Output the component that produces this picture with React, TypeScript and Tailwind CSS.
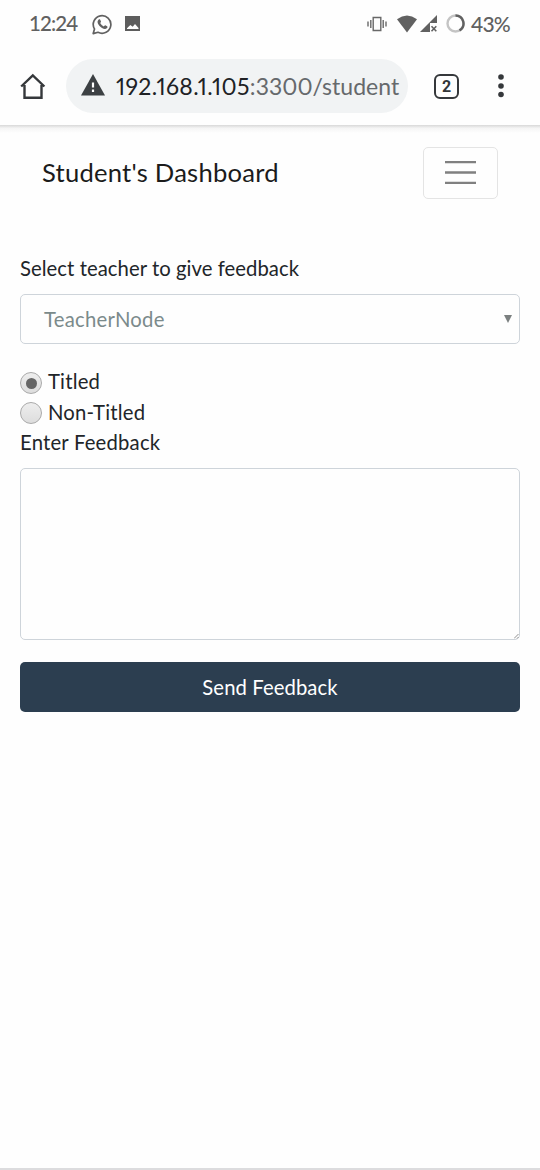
import React from "react";

function StatusBar() {
  return (
    <div className="flex h-[47px] items-center pl-[29px] pr-[29px] text-[#616161]">
      <span className="w-[49px] whitespace-nowrap text-[20.5px] font-medium leading-none tracking-[-0.9px]">12:24</span>
      <svg className="ml-[14px] mt-px h-[21px] w-[21px]" viewBox="0 0 21 21" fill="none">
        <path d="M1.2 19.6 2.5 15A8.8 8.8 0 1 1 6 18.3Z" stroke="#616161" strokeWidth="1.7" strokeLinejoin="round" />
        <path d="M6.7 5.6c.5-.5 1.2-.5 1.5.1l.8 1.9c.1.5-.5 1.1-.8 1.5.8 1.5 2 2.6 3.6 3.3.5-.4 1-1.3 1.5-1.1l1.8.9c.7.4.4 1.4-.1 1.9-1.4 1.4-3.2.9-5-.1-1.9-1.1-3.3-2.6-4.1-4.5-.6-1.4-.4-2.8.8-3.9Z" fill="#616161" />
      </svg>
      <svg className="ml-[12px] h-[15px] w-[15px]" viewBox="0 0 15 15">
        <path fillRule="evenodd" fill="#5d5d5d" d="M0 0h15v15H0ZM2 13h11.5v-1L10 8 7.7 10.8 5.3 9 2 12.2Z" />
      </svg>
      <svg className="ml-auto h-[16px] w-[20px]" viewBox="0 0 20 16" fill="none" stroke="#686868" strokeWidth="1.4">
        <path d="M6.2 1.5h7.6v13H6.2ZM3.8 4v8M1 5.5v5M16.2 4v8M19 5.5v5" />
      </svg>
      <svg className="ml-[10px] h-[18px] w-[20px]" viewBox="0 0 20 18" fill="#616161">
        <path d="M0 4.2Q10-3.2 20 4.2L10 17.5Z" />
      </svg>
      <svg className="ml-[3px] -mt-px h-[19px] w-[18px]" viewBox="0 0 18 19">
        <path d="M0 18 17 1v8h-7v9Z" fill="#616161" />
        <path d="m11.5 12.2 4.8 5M16.3 12.2l-4.8 5" stroke="#616161" strokeWidth="1.6" />
      </svg>
      <svg className="ml-[8px] h-[19px] w-[19px]" viewBox="0 0 19 19" fill="none" strokeWidth="2.4">
        <circle cx="9.5" cy="9.5" r="8" stroke="#c4c4c4" />
        <path d="M9.5 1.5a8 8 0 0 1 4 14.9" stroke="#616161" />
      </svg>
      <span className="-mt-px ml-[6px] w-[40px] whitespace-nowrap text-[21px] font-medium leading-none tracking-[-0.8px]">43%</span>
    </div>
  );
}

function BrowserBar() {
  return (
    <div className="flex h-[79px] items-start pl-[20px] pt-[12px] text-[#333638]">
      <svg className="mt-[14px] h-[27px] w-[26px]" viewBox="0 0 26 27" fill="none" stroke="#35383b" strokeWidth="2.4">
        <path d="M1.2 13.5 12.8 2.5l11.6 11M4.5 12v12.7h17V12" />
      </svg>
      <div className="ml-[20px] flex h-[54px] w-[342px] items-center rounded-full bg-[#f1f3f4]">
        <svg className="ml-[15px] -mt-[2px] h-[22px] w-[24px]" viewBox="0 0 24 22">
          <path d="M12 0 24 21.5H0Z" fill="#3c4043" />
          <path d="M12 8.5v5M12 15.5V18" stroke="#fff" strokeWidth="2.2" />
        </svg>
        <span className="ml-[11px] whitespace-nowrap text-[23px] leading-none tracking-[0.35px] text-[#202124] [font-feature-settings:'pnum']">
          192.168.1.105<span className="tracking-[0.05px] text-[#66696c]">:3300/student</span>
        </span>
      </div>
      <div className="ml-[26px] mt-[15px] flex h-[25px] w-[25px] items-center justify-center rounded-[6px] border-[2.5px] border-[#35383b] font-['Roboto'] text-[16px] font-bold leading-none">2</div>
      <svg className="ml-[39px] mt-[15px] h-[24px] w-[6px]" viewBox="0 0 6 24" fill="#35383b">
        <circle cx="3" cy="3" r="2.8" /><circle cx="3" cy="12" r="2.8" /><circle cx="3" cy="20.5" r="2.8" />
      </svg>
    </div>
  );
}

function Radio({ label, checked }: { label: string; checked?: boolean }) {
  return (
    <label className="flex h-[30.4px] items-center">
      <span className="mr-[6px] mt-[3px] flex h-[22px] w-[22px] items-center justify-center rounded-full border border-[#aaaaaa] bg-linear-to-b from-[#eeeeee] to-[#dddddd]">
        {checked && <span className="h-[11px] w-[11px] rounded-full bg-[#666666]" />}
      </span>
      {label}
    </label>
  );
}

export default function App() {
  return (
    <div className="flex h-[1170px] w-[540px] flex-col overflow-hidden border-b-2 border-[#dcdcde] bg-[#fefefe] font-['Lato','Noto_Sans',sans-serif]">
      <header className="h-[125px] shrink-0">
        <StatusBar />
        <BrowserBar />
      </header>
      <div className="h-[8px] shrink-0 bg-linear-to-b from-[#d8d8d8] via-[#f5f5f5] via-40% to-[#fefefe]" />
      <nav className="flex h-[80px] shrink-0 items-center justify-between pl-[42px] pr-[42px] text-[#1b1b1b]">
        <span className="text-[25.6px] leading-none tracking-[0.23px]">Student's Dashboard</span>
        <button aria-label="Menu" className="flex h-[52px] w-[75px] items-center justify-center rounded-[5px] border border-[#e4e4e4]">
          <svg className="h-[28px] w-[32px]" viewBox="0 0 32 28" stroke="#808080" strokeWidth="2.4">
            <path d="M0 3.1h31M0 13.5h31M0 23.9h31" />
          </svg>
        </button>
      </nav>
      <main className="flex flex-col px-[20px] pt-[40px] text-[20.3px] leading-[30.4px] text-[#212529]">
        <div className="h-[41px] tracking-[0.05px]">Select teacher to give feedback</div>
        <div className="flex h-[50px] items-center justify-between rounded-[5px] border border-[#ced4da] pl-[23px] pr-[7px] text-[#7b8a8b]">
          <span className="tracking-[0.25px]">TeacherNode</span>
          <svg className="h-[8px] w-[8px]" viewBox="0 0 8 8"><path d="M0 0h8L4 8Z" fill="#7b8080" /></svg>
        </div>
        <div className="pt-[22.4px] tracking-[0.2px]">
          <Radio label="Titled" checked />
          <Radio label="Non-Titled" />
          <div>Enter Feedback</div>
        </div>
        <div className="mt-[10.6px] flex h-[172px] items-end justify-end rounded-[5px] border border-[#ced4da]">
          <svg className="h-[5px] w-[5px]" viewBox="0 0 5 5" stroke="#777" strokeWidth=".8"><path d="M0 4.5 4.5 0M3 4.5 4.5 3" /></svg>
        </div>
        <button className="mt-[22px] h-[50px] rounded-[5px] bg-[#2c3e50] tracking-[0.08px] text-white">Send Feedback</button>
      </main>
    </div>
  );
}
